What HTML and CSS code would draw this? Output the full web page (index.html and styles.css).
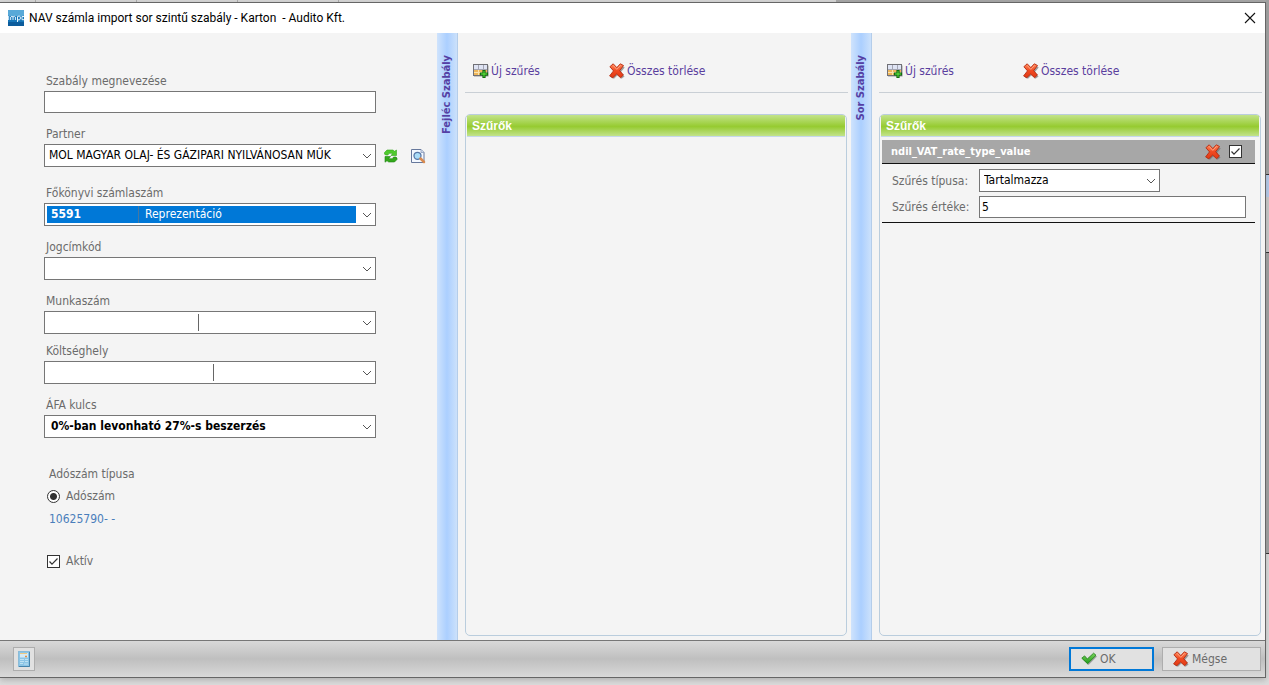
FILE: index.html
```html
<!DOCTYPE html>
<html lang="hu">
<head>
<meta charset="utf-8">
<title>NAV számla import sor szintű szabály - Karton - Audito Kft.</title>
<link rel="stylesheet" href="styles.css">
</head>
<body>
<svg class="defs" aria-hidden="true">
  <defs>
    <linearGradient id="red" x1="0" y1="0" x2="0" y2="1"><stop offset="0" stop-color="#ff8a5c"/><stop offset=".5" stop-color="#f04a22"/><stop offset="1" stop-color="#e23a14"/></linearGradient>
    <linearGradient id="green" x1="0" y1="0" x2="0" y2="1"><stop offset="0" stop-color="#7bd35c"/><stop offset="1" stop-color="#1f9a1a"/></linearGradient>
    <symbol id="i-cross" viewBox="0 0 16 16">
      <path d="M5.500 3 9 6.500 13 2.500 15.700 4.500 12 9 15.500 13.500 12.500 15.700 8.800 12 5 15.700 1.800 14.500 5.900 9.400Z" fill="#666" opacity=".6"/>
      <path d="M4.200.8 7.800 4.600 11.300.8 14.500 2.500 10.700 7.700 14.400 12 11.600 14.700 7.600 11.100 3.800 14.700.6 12.900 4.500 7.900.9 3.700Z" fill="url(#red)" stroke="#b52a10" stroke-width=".9" stroke-linejoin="round"/>
      <path d="M4.300 2.500 7.800 6.400 11.500 2.400" fill="none" stroke="#ffb090" stroke-width=".8"/>
    </symbol>
    <symbol id="i-check" viewBox="0 0 16 16">
      <path d="M2 8.500 4.500 6.500 7 9.500 13.500 3.500 16 5.500 7.500 14Z" fill="#888" opacity=".7"/>
      <path d="M.8 7.200 3.600 4.900 6.300 8 12.600 2.200 15 4.300 6.600 12.700Z" fill="url(#green)" stroke="#24861c" stroke-width=".9" stroke-linejoin="round"/>
    </symbol>
    <symbol id="i-table" viewBox="0 0 16 16">
      <rect x="1" y="2.500" width="14.500" height="11" fill="#999"/>
      <rect x=".5" y="1.500" width="14" height="11" fill="#fff" stroke="#707076"/>
      <path d="M1 2h13v4H1z" fill="#dfe4f4"/>
      <path d="M1 6h13v6H1z" fill="#efb65a"/>
      <path d="M5.500 2v10M10.500 2v10M1 9.500h13" stroke="#fbe3b0"/>
      <path d="M5.500 2v4M10.500 2v4M1 6.500h13" stroke="#a4a6b4"/>
      <path d="M10 7.500h2v2.500h2.500v2H12v2.500h-2V12H7.500v-2H10z" fill="#6cf545" stroke="#116c10" stroke-width="1.200"/>
    </symbol>
    <symbol id="i-refresh" viewBox="0 0 16 16">
      <path d="M1.500 4.500 4 2h6l1.500 1.300L13.500 2v5.500H8L9.800 5.300H6L5 7H2.500L1.500 6Z" fill="#4fcb2d" stroke="#36a51f" stroke-width=".6" stroke-linejoin="round"/>
      <path d="M14 11.500 11.500 14H5.700L4 12.700 2 14.200V8.500h5.500L5.700 10.700H9.500L10.500 9H13l1 1Z" fill="#33a91b" stroke="#208414" stroke-width=".6" stroke-linejoin="round"/>
    </symbol>
    <symbol id="i-preview" viewBox="0 0 16 16">
      <path d="M1.500 1.500h9.500l3 3v10H1.500Z" fill="#f3f8ff" stroke="#66789c"/>
      <path d="M11 1.500v3h3" fill="#cbd8ec" stroke="#8294b4" stroke-width=".7"/>
      <circle cx="7.500" cy="7.800" r="3.500" fill="#a9dcf8" stroke="#5677a6" stroke-width="1.300"/>
      <path d="m10.500 10.500 3.500 3.500" stroke="#d88b50" stroke-width="2.500" stroke-linecap="round"/>
    </symbol>
    <symbol id="i-sheet" viewBox="0 0 12 16">
      <rect x=".5" y=".5" width="11" height="15" fill="#8cc5e6" stroke="#8abbd8"/>
      <path d="M11.500 1v14.500H1" fill="none" stroke="#4684ac"/>
      <rect x="2" y="2" width="8" height="4.500" fill="#d5eaf4"/>
      <path d="M2 2.500h7" stroke="#efc880"/>
      <path d="M7 5.500h2" stroke="#e09046" stroke-width="1.500"/>
      <path d="M2 8.500h4M2 10.500h4M2 12.500h3M7 8.500h3M7 10.500h3M6 13h4" stroke="#bfe2f3"/>
    </symbol>
    <symbol id="i-logo" viewBox="0 0 16 16">
      <rect width="16" height="16" rx="1" fill="#1676b8"/>
      <rect width="16" height="6" rx="1" fill="#58a9d8"/>
      <path d="M0 12h16v4H0z" fill="#0c5c9c"/>
      <path d="M.7 6v4M2.700 10V7q1.300-1.500 2.300 0v3M5 7q1.400-1.500 2.400 0v3M9.500 12V6.500q2-1 2.800.2v2.500q-1 1.200-2.800.5M16 6.500h-2v3.200h2" fill="none" stroke="#e4f5ff" stroke-width="1"/>
    </symbol>
  </defs>
</svg>
<div class="backdrop-top"><i></i><i></i><i></i><i></i></div>
<main class="dialog">
  <header class="titlebar">
    <svg class="icon"><use href="#i-logo"/></svg>
    <h1>NAV számla import sor szintű szabály - Karton&nbsp; - Audito Kft.</h1>
    <button class="close" aria-label="Bezárás"><svg viewBox="0 0 12 12"><path d="m1 1 10 10M11 1 1 11" fill="none" stroke="#111" stroke-width="1.100"/></svg></button>
  </header>
  <div class="content">
    <form class="rule-form">
      <div class="field"><label for="name">Szabály megnevezése</label><input class="box" id="name" type="text"></div>
      <div class="field"><label for="partner">Partner</label>
        <div class="with-tools">
          <select class="box" id="partner"><option>MOL MAGYAR OLAJ- ÉS GÁZIPARI NYILVÁNOSAN MŰK</option></select>
          <button type="button" class="tool" aria-label="Frissítés"><svg class="icon"><use href="#i-refresh"/></svg></button>
          <button type="button" class="tool" aria-label="Megtekintés"><svg class="icon"><use href="#i-preview"/></svg></button>
        </div>
      </div>
      <div class="field section"><label for="ledger">Főkönyvi számlaszám</label>
        <div class="combo"><select class="box" id="ledger"><option></option></select><div class="selection"><b>5591</b><span>Reprezentáció</span></div></div>
      </div>
      <div class="field"><label for="title">Jogcímkód</label><select class="box" id="title"><option></option></select></div>
      <div class="field"><label for="job">Munkaszám</label>
        <div class="combo"><select class="box" id="job"><option></option></select><i class="divider job"></i></div>
      </div>
      <div class="field tight"><label for="cost">Költséghely</label>
        <div class="combo"><select class="box" id="cost"><option></option></select><i class="divider cost"></i></div>
      </div>
      <div class="field"><label for="vat">ÁFA kulcs</label><select class="box strong" id="vat"><option>0%-ban levonható 27%-s beszerzés</option></select></div>
      <fieldset class="tax">
        <legend>Adószám típusa</legend>
        <label class="choice"><input type="radio" name="tax" checked>Adószám</label>
        <output>10625790- -</output>
      </fieldset>
      <label class="choice active"><input type="checkbox" checked>Aktív</label>
    </form>

    <div class="strip"><span>Fejléc Szabály</span></div>
    <section class="pane">
      <div class="toolbar">
        <button><svg class="icon"><use href="#i-table"/></svg>Új szűrés</button>
        <button><svg class="icon"><use href="#i-cross"/></svg>Összes törlése</button>
      </div>
      <div class="group"><h2>Szűrők</h2></div>
    </section>

    <div class="strip"><span>Sor Szabály</span></div>
    <section class="pane">
      <div class="toolbar">
        <button><svg class="icon"><use href="#i-table"/></svg>Új szűrés</button>
        <button><svg class="icon"><use href="#i-cross"/></svg>Összes törlése</button>
      </div>
      <div class="group"><h2>Szűrők</h2>
        <article class="filter">
          <header><h3>ndil_VAT_rate_type_value</h3>
            <button class="tool" aria-label="Törlés"><svg class="icon"><use href="#i-cross"/></svg></button>
            <input type="checkbox" checked aria-label="Szűrő aktív"></header>
          <div class="filter-body">
            <label for="ftype">Szűrés típusa:</label><select class="box short" id="ftype"><option>Tartalmazza</option></select>
            <label for="fvalue">Szűrés értéke:</label><input class="box" id="fvalue" type="text" value="5">
          </div>
        </article>
      </div>
    </section>
  </div>
  <footer class="actions">
    <button class="sheet" aria-label="Lap"><svg><use href="#i-sheet"/></svg></button>
    <button class="action primary"><svg class="icon"><use href="#i-check"/></svg>OK</button>
    <button class="action cancel"><svg class="icon"><use href="#i-cross"/></svg>Mégse</button>
  </footer>
</main>
</body>
</html>
```
FILE: styles.css
```css
* { box-sizing: border-box; }
body {
  margin: 0; min-height: 100vh; display: flex; flex-direction: column;
  padding: 0 3px 7px 0; overflow: hidden;
  font: 12px/18px "DejaVu Sans Condensed", "DejaVu Sans", sans-serif;
  color: #6b6b6b;
  background: linear-gradient(#a0a0a0 0 174px, #222 174px 175px, #b5cdf0 175px 197px, #ccc 197px 252px, #222 252px 253px, #a0a0a0 253px 553px, #222 553px 554px, #dcdcdc 554px) right / 3px 100% no-repeat, #dcdcdc;
}
.defs { position: absolute; width: 0; height: 0; }
.icon { width: 16px; height: 16px; flex: none; }
.backdrop-top { height: 2px; display: flex; gap: 100px; padding-left: 35px; background: linear-gradient(90deg, #d8d8d8 0 836px, #a6a6a6 836px); }
.backdrop-top i { width: 1px; background: #aaa; }
.dialog { flex: 1; display: flex; flex-direction: column; border: solid #666; border-width: 1px 1px 1px 0; background: #f4f4f4; box-shadow: 0 2px 6px #8888; }
.titlebar { height: 30px; flex: none; display: flex; align-items: center; gap: 5px; padding: 0 7px 0 8px; background: #fff; }
h1 { flex: 1; margin: 0; font: 12px/18px Roboto, "Noto Sans", sans-serif; color: #000; }
button { font: inherit; color: inherit; cursor: pointer; }
.close, .tool { border: 0; background: none; padding: 0; display: flex; }
.close { padding: 2px; }
.close svg { width: 12px; height: 12px; }
.content { flex: 1; display: flex; }
.rule-form { width: 437px; flex: none; display: flex; flex-direction: column; gap: 7px; padding: 35px 10px 0 44px; }
.field { display: grid; gap: 1px; margin-top: 5px; }
.field:first-child { margin-top: 4px; }
.field.section { margin-top: 10px; }
.field.tight { margin-top: 1px; }
.field > label { padding-left: 2px; }
.box { width: 332px; height: 23px; border: 1px solid #767676; border-radius: 0; background: #fff; color: #000; font: inherit; line-height: 20px; padding: 0 4px; outline: 0; display: block; }
input.box { height: 22px; padding: 0 2px; }
select.box {
  appearance: none; padding: 0 20px 1px 4px;
  background: #fff url("data:image/svg+xml,%3Csvg xmlns='http://www.w3.org/2000/svg' width='10' height='6'%3E%3Cpath d='m1 1 4 4 4-4' fill='none' stroke='%23555'/%3E%3C/svg%3E") right 3px center no-repeat;
}
.box.strong { font-weight: bold; padding-left: 6px; }
.with-tools { display: flex; align-items: center; }
.with-tools .box { flex: none; margin-right: 7px; }
.with-tools .tool + .tool { margin-left: 11px; }
.combo { position: relative; width: 332px; }
.selection { position: absolute; top: 3px; bottom: 3px; left: 3px; right: 20px; display: flex; background: #0078d7; color: #fff; line-height: 16px; pointer-events: none; }
.selection b { width: 92px; padding-left: 4px; border-right: 1px solid #4777a0; }
.selection span { padding-left: 6px; }
.divider { position: absolute; top: 3px; bottom: 3px; width: 1px; background: #666; }
.job { left: 154px; }
.cost { left: 169px; }
.tax { border: 0; margin: 20px 0 0; padding: 0 5px; display: grid; gap: 5px; }
legend { padding: 0; margin-bottom: 4px; }
.choice { display: flex; align-items: center; gap: 6px; }
.tax .choice { margin-left: -2px; }
.tax output { color: #4a7ebb; }
.active { margin: 17px 0 0 3px; }
input[type="radio"], input[type="checkbox"] { appearance: none; width: 13px; height: 13px; margin: 0; border: 1px solid #333; background: #fff; flex: none; }
input[type="radio"] { border-radius: 50%; }
input[type="radio"]:checked { background: radial-gradient(circle, #333 3px, #fff 4px); }
input[type="checkbox"]:checked { background: #fff url("data:image/svg+xml,%3Csvg xmlns='http://www.w3.org/2000/svg' width='11' height='11'%3E%3Cpath d='m1.500 5.500 2.500 2.700 5.500-5.700' fill='none' stroke='%23333' stroke-width='1.200'/%3E%3C/svg%3E") center no-repeat; }
.strip { width: 21px; flex: none; padding-top: 22px; border-right: 1px solid #b4cdea; background: linear-gradient(90deg, #cfe3fc, #abcfff 50%, #cce1fb); }
.strip span { writing-mode: vertical-rl; transform: rotate(180deg); line-height: 20px; font-size: 11px; font-weight: bold; color: #553fa4; }
.pane { flex: 1; min-width: 0; display: flex; flex-direction: column; padding: 0 3px 4px 7px; }
.toolbar { height: 60px; display: flex; align-items: flex-end; padding: 0 8px 12px; border-bottom: 1px solid #c9cfd5; }
.toolbar button { display: flex; align-items: center; gap: 2px; width: 136px; padding: 0; border: 0; background: none; color: #5a3e9e; }
.group { flex: 1; margin: 21px 1px 0 0; border: 1px solid #bacddd; border-radius: 5px; overflow: hidden; }
h2 { margin: 0 1px 3px; height: 22px; padding-left: 5px; line-height: 23px; font-family: "Liberation Sans", Arial, sans-serif; font-size: 12px; color: #fff; border-bottom: 1px solid #c5d8ea; background: linear-gradient(#c2e389, #9acd38 50%, #96cb31 55%, #c2e38a); }
.filter { margin: 0 5px 0 2px; border-bottom: 1px solid #111; }
.filter header { height: 24px; display: flex; align-items: center; gap: 8px; padding: 0 13px 0 9px; background: #a7a7a7; border-bottom: 1px solid #111; }
h3 { flex: 1; margin: 0; color: #fff; font-size: 11px; }
.filter-body { display: grid; grid-template-columns: 82px 1fr; gap: 4px 5px; align-items: center; padding: 5px 9px 4px 10px; }
.filter-body .box { width: 100%; }
.filter-body .short { width: 181px; }
.actions { height: 37px; flex: none; display: flex; align-items: center; gap: 8px; padding: 0 4px 1px 13px; border-top: 1px solid #777; background: linear-gradient(#d9d9d9, #bfbfbf 50%, #d9d9d9); }
.actions button { height: 24px; border: 1px solid #adadad; background: #e1e1e1; }
.sheet { width: 22px; padding: 0; margin-right: auto; display: flex; align-items: center; justify-content: center; }
.sheet svg { width: 12px; height: 16px; }
.actions .action { display: flex; align-items: center; gap: 3px; padding: 0 10px; }
.actions .primary { width: 85px; border: 2px solid #0078d7; }
.actions .cancel { width: 99px; }
```
